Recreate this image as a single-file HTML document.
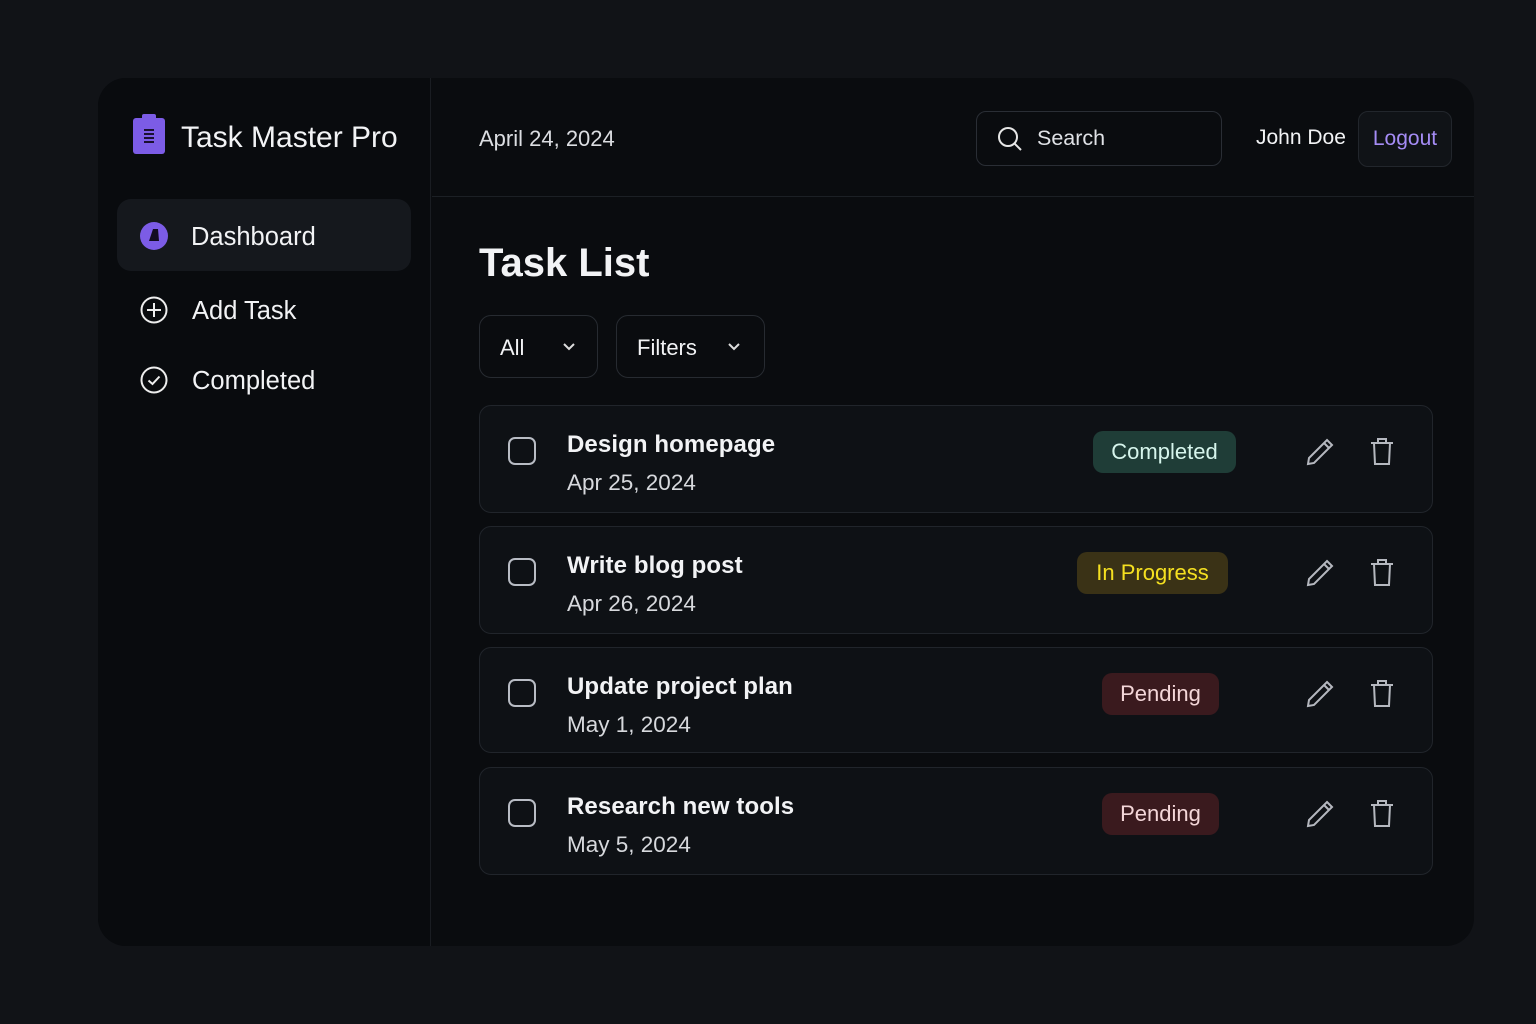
<!DOCTYPE html>
<html><head><style>
*{box-sizing:border-box;margin:0;padding:0}
body{width:1536px;height:1024px;background:#111317;font-family:"Liberation Sans",sans-serif;color:#f2f3f5;position:relative;overflow:hidden}
.card{position:absolute;left:98px;top:78px;width:1376px;height:868px;background:#0a0c0f;border-radius:28px;overflow:hidden}
.side{position:absolute;left:0;top:0;width:333px;height:100%;border-right:1px solid #1a1d22;background:#090b0e}
.abs{position:absolute}
.row{position:absolute;left:381px;width:954px;height:108px;background:#0e1115;border:1px solid #21252b;border-radius:12px}
.cb{position:absolute;left:28px;top:31px;width:28px;height:28px;border:2px solid #b8bcc4;border-radius:7px}
.t{position:absolute;left:87px;top:25px;font-size:24px;font-weight:bold;letter-spacing:0.1px}
.d{position:absolute;left:87px;top:64px;font-size:22.5px;color:#d7d9dd}
.badge{position:absolute;top:25px;height:42px;border-radius:10px;font-size:22px;line-height:42px;text-align:center}
.ic{position:absolute;top:31px}
</style></head><body>
<div class="card">
<div class="side">
 <svg class="abs" style="left:34px;top:36px" width="34" height="40" viewBox="0 0 34 40"><rect x="1" y="4" width="32" height="36" rx="3" fill="#7c5ce6"/><rect x="10" y="0" width="14" height="8" rx="2" fill="#7c5ce6"/><g stroke="#1a1030" stroke-width="2"><line x1="12" y1="16" x2="22" y2="16"/><line x1="12" y1="20" x2="22" y2="20"/><line x1="12" y1="24" x2="22" y2="24"/><line x1="12" y1="28" x2="22" y2="28"/></g></svg>
 <div class="abs" style="left:83px;top:43px;font-size:30px">Task Master Pro</div>
 <div class="abs" style="left:19px;top:121px;width:294px;height:72px;background:#15181d;border-radius:14px"></div>
 <svg class="abs" style="left:41px;top:143px" width="30" height="30" viewBox="0 0 30 30"><circle cx="15" cy="15" r="14" fill="#7c5ce6"/><path d="M14 8 L19 8 L20 20 L10 20 Z" fill="#120c22"/></svg>
 <div class="abs" style="left:93px;top:145px;font-size:25.5px">Dashboard</div>
 <svg class="abs" style="left:42px;top:218px" width="28" height="28" viewBox="0 0 28 28" fill="none" stroke="#eee" stroke-width="2"><circle cx="14" cy="14" r="12.5"/><line x1="14" y1="7" x2="14" y2="21"/><line x1="7" y1="14" x2="21" y2="14"/></svg>
 <div class="abs" style="left:94px;top:219px;font-size:25.5px">Add Task</div>
 <svg class="abs" style="left:42px;top:288px" width="28" height="28" viewBox="0 0 28 28" fill="none" stroke="#eee" stroke-width="2"><circle cx="14" cy="14" r="12.5"/><path d="M8.5 14.5 L12.5 18 L19.5 10.5"/></svg>
 <div class="abs" style="left:94px;top:289px;font-size:25.5px">Completed</div>
</div>
<div class="abs" style="left:334px;top:118px;width:1042px;height:1px;background:#1c2025"></div>
<div class="abs" style="left:381px;top:48px;font-size:22px;color:#dcdee2">April 24, 2024</div>
<div class="abs" style="left:878px;top:33px;width:246px;height:55px;border:1px solid #2a2e35;border-radius:10px"></div>
<svg class="abs" style="left:898px;top:47px" width="28" height="28" viewBox="0 0 28 28" fill="none" stroke="#e6e6e6" stroke-width="2"><circle cx="12" cy="12" r="9"/><line x1="18.5" y1="18.5" x2="25" y2="25"/></svg>
<div class="abs" style="left:939px;top:48px;font-size:21.5px;color:#e0e2e6">Search</div>
<div class="abs" style="left:1158px;top:48px;font-size:21px">John Doe</div>
<div class="abs" style="left:1260px;top:33px;width:94px;height:56px;border:1px solid #22262c;background:#101317;border-radius:10px;color:#a58cf5;font-size:21px;line-height:54px;text-align:center">Logout</div>
<div class="abs" style="left:381px;top:163px;font-size:40px;font-weight:bold">Task List</div>
<div class="abs" style="left:381px;top:237px;width:119px;height:63px;border:1px solid #272b31;border-radius:12px"><span class="abs" style="left:20px;top:19px;font-size:22px">All</span><svg class="abs" style="left:82px;top:26px" width="14" height="10" viewBox="0 0 14 10" fill="none" stroke="#ddd" stroke-width="2"><path d="M2 2 L7 7 L12 2"/></svg></div>
<div class="abs" style="left:518px;top:237px;width:149px;height:63px;border:1px solid #272b31;border-radius:12px"><span class="abs" style="left:20px;top:19px;font-size:22px">Filters</span><svg class="abs" style="left:110px;top:26px" width="14" height="10" viewBox="0 0 14 10" fill="none" stroke="#ddd" stroke-width="2"><path d="M2 2 L7 7 L12 2"/></svg></div>

<div class="row" style="top:327px"><div class="cb"></div><div class="t">Design homepage</div><div class="d">Apr 25, 2024</div>
<div class="badge" style="left:613px;width:143px;background:#1f3d37;color:#d6f5ec">Completed</div>
<svg class="ic" style="left:825px" width="30" height="30" viewBox="0 0 30 30" fill="none" stroke="#b5b8bf" stroke-width="2"><path d="M22 3 L27 8 L9 26 L3 27 L4 21 Z"/><line x1="19" y1="6" x2="24" y2="11"/></svg>
<svg class="ic" style="left:889px" width="26" height="30" viewBox="0 0 26 30" fill="none" stroke="#b5b8bf" stroke-width="2"><path d="M2 6 H24 M9 6 V2 H17 V6 M5 6 L6 27 H20 L21 6"/></svg></div>

<div class="row" style="top:448px"><div class="cb"></div><div class="t">Write blog post</div><div class="d">Apr 26, 2024</div>
<div class="badge" style="left:597px;width:151px;background:#3a3216;color:#f5e020">In Progress</div>
<svg class="ic" style="left:825px" width="30" height="30" viewBox="0 0 30 30" fill="none" stroke="#b5b8bf" stroke-width="2"><path d="M22 3 L27 8 L9 26 L3 27 L4 21 Z"/><line x1="19" y1="6" x2="24" y2="11"/></svg>
<svg class="ic" style="left:889px" width="26" height="30" viewBox="0 0 26 30" fill="none" stroke="#b5b8bf" stroke-width="2"><path d="M2 6 H24 M9 6 V2 H17 V6 M5 6 L6 27 H20 L21 6"/></svg></div>

<div class="row" style="top:569px;height:106px"><div class="cb"></div><div class="t">Update project plan</div><div class="d">May 1, 2024</div>
<div class="badge" style="left:622px;width:117px;background:#3a1a1e;color:#f3d6d8">Pending</div>
<svg class="ic" style="left:825px" width="30" height="30" viewBox="0 0 30 30" fill="none" stroke="#b5b8bf" stroke-width="2"><path d="M22 3 L27 8 L9 26 L3 27 L4 21 Z"/><line x1="19" y1="6" x2="24" y2="11"/></svg>
<svg class="ic" style="left:889px" width="26" height="30" viewBox="0 0 26 30" fill="none" stroke="#b5b8bf" stroke-width="2"><path d="M2 6 H24 M9 6 V2 H17 V6 M5 6 L6 27 H20 L21 6"/></svg></div>

<div class="row" style="top:689px"><div class="cb"></div><div class="t">Research new tools</div><div class="d">May 5, 2024</div>
<div class="badge" style="left:622px;width:117px;background:#3a1a1e;color:#f3d6d8">Pending</div>
<svg class="ic" style="left:825px" width="30" height="30" viewBox="0 0 30 30" fill="none" stroke="#b5b8bf" stroke-width="2"><path d="M22 3 L27 8 L9 26 L3 27 L4 21 Z"/><line x1="19" y1="6" x2="24" y2="11"/></svg>
<svg class="ic" style="left:889px" width="26" height="30" viewBox="0 0 26 30" fill="none" stroke="#b5b8bf" stroke-width="2"><path d="M2 6 H24 M9 6 V2 H17 V6 M5 6 L6 27 H20 L21 6"/></svg></div>
</div>
</body></html>
